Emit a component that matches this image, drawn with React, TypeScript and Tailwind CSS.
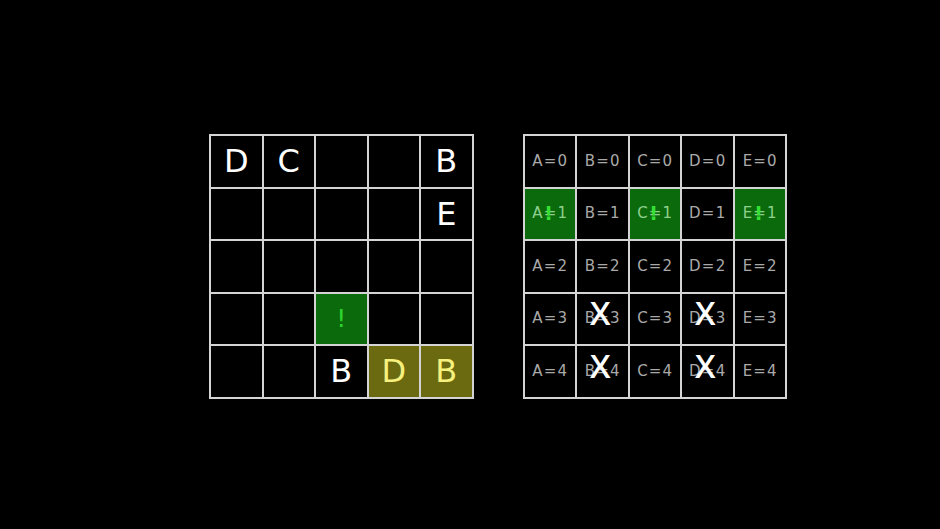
import React from "react";

const font = { fontFamily: "'DejaVu Sans', Lato, sans-serif" };
const xFont = { fontFamily: "'Open Sans', 'DejaVu Sans', sans-serif" };

type LCell = { t?: string; kind?: "g" | "o" };

const left: LCell[][] = [
  [{ t: "D" }, { t: "C" }, {}, {}, { t: "B" }],
  [{}, {}, {}, {}, { t: "E" }],
  [{}, {}, {}, {}, {}],
  [{}, {}, { t: "!", kind: "g" }, {}, {}],
  [{}, {}, { t: "B" }, { t: "D", kind: "o" }, { t: "B", kind: "o" }],
];

const letters = ["A", "B", "C", "D", "E"];
const greenRow1 = [0, 2, 4];
const xCells = (r: number, c: number) => (r === 3 || r === 4) && (c === 1 || c === 3);

function LeftGrid() {
  return (
    <div className="grid grid-cols-[repeat(5,50.5px)] grid-rows-[repeat(5,50.5px)] gap-[2px] p-[2px] bg-[#d4d4d4]" style={font}>
      {left.flat().map((c, i) => {
        const bg = c.kind === "g" ? "bg-[#0b6a0b]" : c.kind === "o" ? "bg-[#6b6a10]" : "bg-black";
        const color = c.kind === "g" ? "text-[#2ed42e] text-[25px]" : c.kind === "o" ? "text-[#f6f07e] text-[32px]" : "text-white text-[32px]";
        return (
          <div key={i} className={`${bg} ${color} flex items-center justify-center leading-none`}>
            {c.t}
          </div>
        );
      })}
    </div>
  );
}

function RightGrid() {
  const cells = [];
  for (let r = 0; r < 5; r++) {
    for (let c = 0; c < 5; c++) {
      const g = r === 1 && greenRow1.includes(c);
      const x = xCells(r, c);
      cells.push(
        <div
          key={`${r}-${c}`}
          className={`${g ? "bg-[#0b6a0b] text-[#8fd08f]" : "bg-black text-[#a9a9a9]"} relative flex items-center justify-center text-[15px] leading-none tracking-[1.2px] pl-[1px]`}
        >
          <span>
            {letters[c]}={r}
          </span>
          {g && (
            <span className="absolute inset-0 flex items-center justify-center text-[#35e035] text-[19px] font-bold pr-[1px]">!</span>
          )}
          {x && (
            <span className="absolute inset-0 flex items-center justify-center text-white text-[33px] font-semibold pr-[3px] pb-[12px]" style={xFont}>X</span>
          )}
        </div>
      );
    }
  }
  return (
    <div className="grid grid-cols-[repeat(5,50.5px)] grid-rows-[repeat(5,50.5px)] gap-[2px] p-[2px] bg-[#d4d4d4]" style={font}>
      {cells}
    </div>
  );
}

export default function App() {
  return (
    <div className="w-[940px] h-[529px] bg-black flex items-start pt-[134px] pl-[209px] gap-[49px]">
      <LeftGrid />
      <RightGrid />
    </div>
  );
}
